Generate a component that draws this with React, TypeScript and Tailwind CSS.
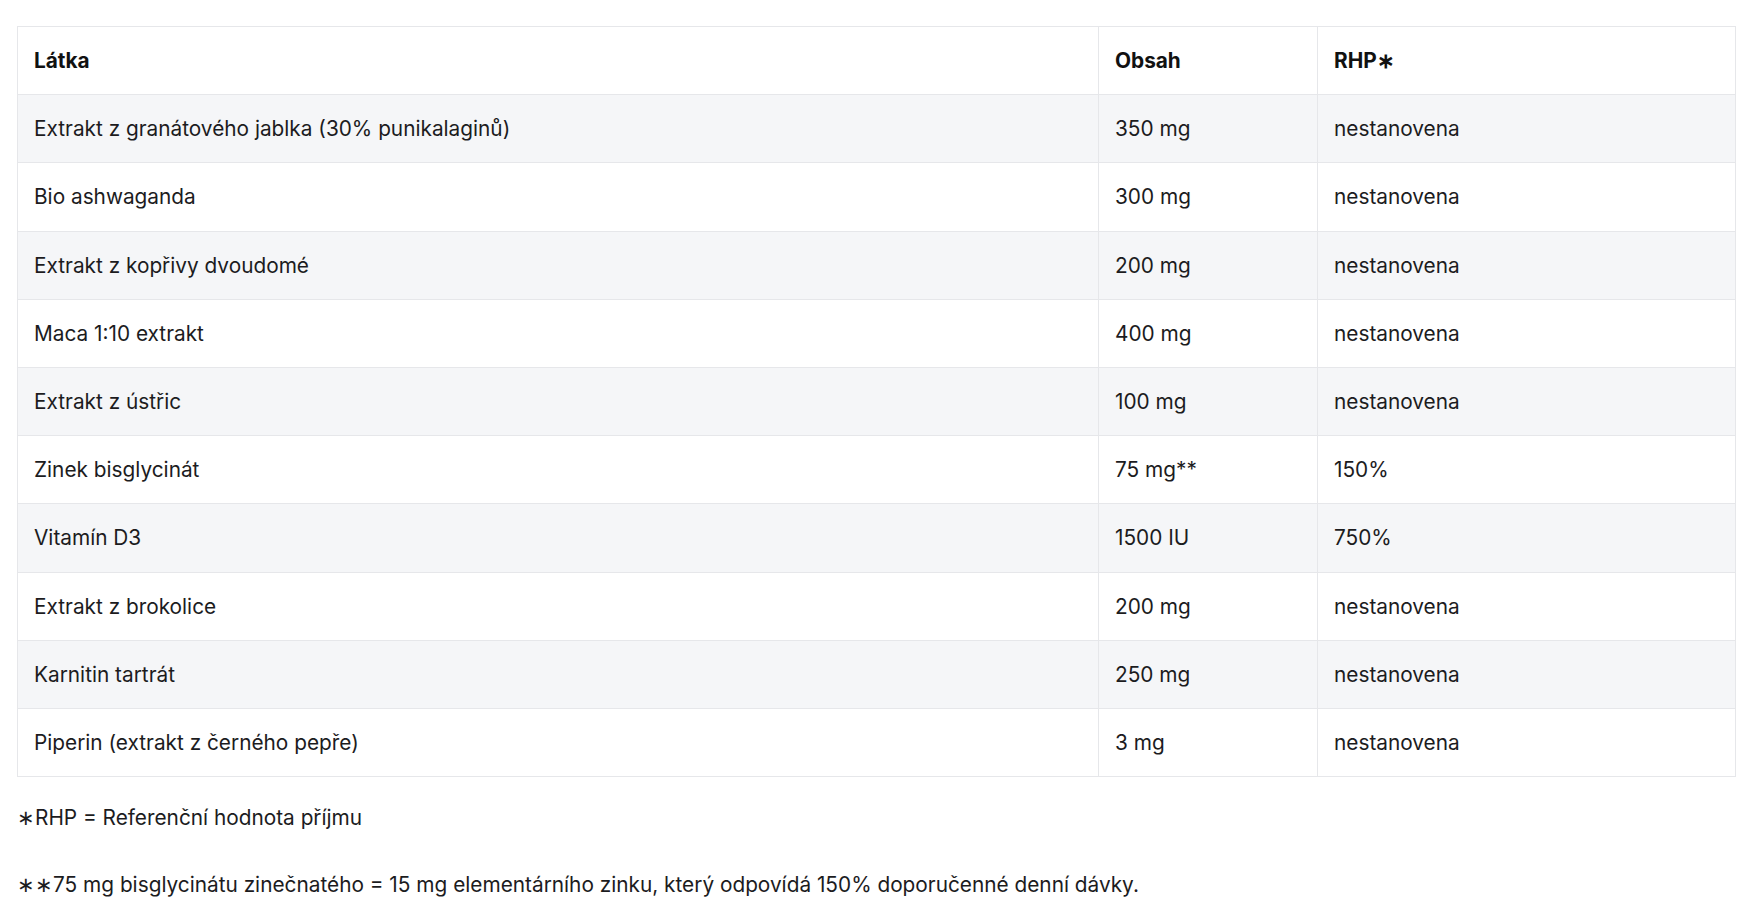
import React from "react";

interface Row {
  name: string;
  amount: string;
  rhp: string;
}

const ROWS: Row[] = [
  { name: "Extrakt z granátového jablka (30% punikalaginů)", amount: "350 mg", rhp: "nestanovena" },
  { name: "Bio ashwaganda", amount: "300 mg", rhp: "nestanovena" },
  { name: "Extrakt z kopřivy dvoudomé", amount: "200 mg", rhp: "nestanovena" },
  { name: "Maca 1:10 extrakt", amount: "400 mg", rhp: "nestanovena" },
  { name: "Extrakt z ústřic", amount: "100 mg", rhp: "nestanovena" },
  { name: "Zinek bisglycinát", amount: "75 mg**", rhp: "150%" },
  { name: "Vitamín D3", amount: "1500 IU", rhp: "750%" },
  { name: "Extrakt z brokolice", amount: "200 mg", rhp: "nestanovena" },
  { name: "Karnitin tartrát", amount: "250 mg", rhp: "nestanovena" },
  { name: "Piperin (extrakt z černého pepře)", amount: "3 mg", rhp: "nestanovena" },
];

const cellClasses = "h-[68.2px] px-4 text-left align-middle border border-[#e6e7ea]";

const App = () => {
  return (
    <div className="min-h-[912px] bg-white px-[17px] pt-[26px] font-['Inter','Liberation_Sans',sans-serif] text-[20.8px] text-[#1c1c1e]">
      <table className="w-full table-fixed border-collapse">
        <colgroup>
          <col className="w-[1081px]" />
          <col className="w-[219px]" />
          <col />
        </colgroup>
        <thead>
          <tr>
            <th className={`${cellClasses} font-bold text-[#111111]`}>Látka</th>
            <th className={`${cellClasses} font-bold text-[#111111]`}>Obsah</th>
            <th className={`${cellClasses} font-bold text-[#111111]`}>RHP∗</th>
          </tr>
        </thead>
        <tbody>
          {ROWS.map((row, index) => (
            <tr key={row.name} className={index % 2 === 0 ? "bg-[#f5f6f8]" : "bg-white"}>
              <td className={cellClasses}>{row.name}</td>
              <td className={cellClasses}>{row.amount}</td>
              <td className={cellClasses}>{row.rhp}</td>
            </tr>
          ))}
        </tbody>
      </table>
      <p className="mt-[26px] leading-[30px]">∗RHP = Referenční hodnota příjmu</p>
      <p className="mt-[37px] leading-[30px]">∗∗75 mg bisglycinátu zinečnatého = 15 mg elementárního zinku, který odpovídá 150% doporučenné denní dávky.</p>
    </div>
  );
};

export default App;
